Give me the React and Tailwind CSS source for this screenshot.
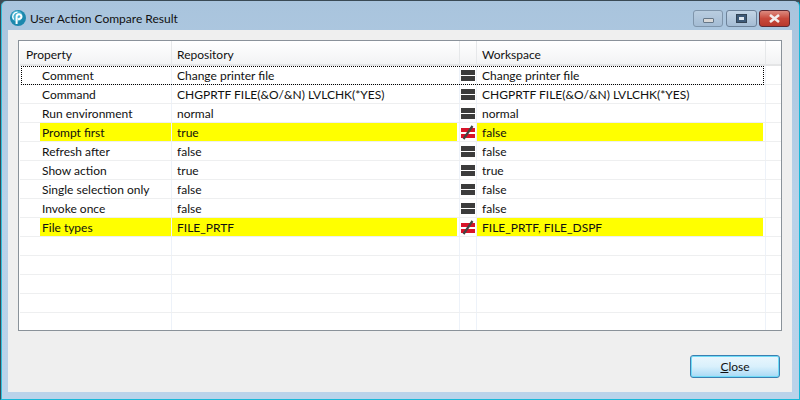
import React from 'react';

const rows = [
    { name: 'Comment', repo: 'Change printer file', work: 'Change printer file', focused: true },
    { name: 'Command', repo: 'CHGPRTF FILE(&O/&N) LVLCHK(*YES)', work: 'CHGPRTF FILE(&O/&N) LVLCHK(*YES)' },
    { name: 'Run environment', repo: 'normal', work: 'normal' },
    { name: 'Prompt first', repo: 'true', work: 'false', diff: true },
    { name: 'Refresh after', repo: 'false', work: 'false' },
    { name: 'Show action', repo: 'true', work: 'true' },
    { name: 'Single selection only', repo: 'false', work: 'false' },
    { name: 'Invoke once', repo: 'false', work: 'false' },
    { name: 'File types', repo: 'FILE_PRTF', work: 'FILE_PRTF, FILE_DSPF', diff: true },
    {}, {}, {}, {}, { last: true },
];

const columns = 'grid grid-cols-[151px_1px_287px_1px_16px_1px_288px_1px_15px]';

const CompareIcon = ({ diff }) => (
    <svg width="14" height="15" viewBox="0 0 14 15" className="block">
        <rect x="0" y={diff ? 3 : 2} width="14" height={diff ? 4 : 5} fill={diff ? '#d8142a' : '#3c3c3c'} />
        <rect x="0" y={diff ? 9 : 8} width="14" height={diff ? 4 : 5} fill={diff ? '#d8142a' : '#3c3c3c'} />
        {diff && <path d="M2.5 14 L11.5 1" stroke="#444" strokeWidth="2.2" />}
    </svg>
);

const Logo = () => (
    <svg width="16" height="16" viewBox="0 0 16 16" className="block shrink-0 ml-[2px]">
        <circle cx="8" cy="8" r="8" fill="#1c88ad" />
        <circle cx="7" cy="6" r="5.5" fill="#49b3d2" />
        <path d="M6.6 14 V6.4 A2.4 2.4 0 1 1 9.8 8.8 L8 9.4" fill="none" stroke="#fff" strokeWidth="2" />
        <path d="M3.6 9.5 A4.6 4.6 0 0 1 7.5 2.2" fill="none" stroke="#fff" strokeWidth="1.3" />
    </svg>
);

const WinButton = ({ children, className }) => (
    <div className={`h-[17px] flex items-center justify-center border rounded-[3px] ${className}`}>
        {children}
    </div>
);

const Cell = ({ children, className = '' }) => (
    <div className={`h-[18px] leading-[20px] whitespace-nowrap overflow-hidden ${className}`}>{children}</div>
);

const Sep = () => <div className="bg-[#edf2f9]" />;

const App = () => {
    return (
        <div className="w-[800px] h-[400px] overflow-hidden bg-[#3d4a52] text-[12px] text-[#111] font-['Lato',sans-serif]">
            <div className="h-full flex flex-col rounded-t-[6px] border border-[#3a4a55] border-b-[#18b8d8] border-r-[#18b8d8] bg-gradient-to-b from-[#a9c4dd] via-[#b9d2e9] to-[#bad3ea] shadow-[inset_1px_0_0_#2fc0dc] px-[7px] pb-[7px]">
                <div className="h-[29px] shrink-0 flex items-start pt-[9px]">
                    <Logo />
                    <span className="ml-[4px] leading-[18px] text-[#111]">User Action Compare Result</span>
                    <div className="ml-auto flex gap-[2px] mr-[2px]">
                        <WinButton className="w-[30px] mr-px border-[#7f95ab] bg-gradient-to-b from-[#b9cde0] to-[#a4bcd4]">
                            <div className="w-[11px] h-[5px] mt-[3px] bg-[#d8d8d8] border border-[#667788] rounded-[1px]" />
                        </WinButton>
                        <WinButton className="w-[31px] border-[#6d8299] bg-gradient-to-b from-[#c3d5e6] to-[#a4bcd4]">
                            <div className="w-[11px] h-[9px] bg-[#3e5a78] border border-[#334455] flex items-center justify-center">
                                <div className="w-[5px] h-[3px] bg-[#dfe8f0]" />
                            </div>
                        </WinButton>
                        <WinButton className="w-[31px] border-[#5e2a34] bg-gradient-to-b from-[#dc8a80] via-[#c8493c] to-[#b8382c]">
                            <svg width="13" height="9" viewBox="0 0 13 9">
                                <path d="M2 1 L11 8 M11 1 L2 8" stroke="#f2eeee" strokeWidth="2.6" />
                            </svg>
                        </WinButton>
                    </div>
                </div>
                <div className="flex-1 flex flex-col bg-[#efefef] px-[10px] pt-[10px] pb-[14px]">
                    <div className="h-[291px] shrink-0 border border-[#8a929a] bg-white overflow-hidden">
                        <div className={`${columns} h-[25px] bg-gradient-to-b from-white to-[#f2f3f4] border-b-2 border-[#e4e5e6] ml-px`}>
                            <div className="pl-[6px] leading-[27px]">Property</div>
                            <div className="bg-[#e6e8ea]" />
                            <div className="pl-[5px] leading-[27px]">Repository</div>
                            <div className="bg-[#e6e8ea]" />
                            <div />
                            <div className="bg-[#e6e8ea]" />
                            <div className="pl-[5px] leading-[27px]">Workspace</div>
                            <div className="bg-[#e6e8ea]" />
                            <div />
                        </div>
                        {rows.map((row, i) => (
                            <div key={i} className={`${columns} ml-px relative ${row.last ? 'h-[16px]' : 'h-[19px] border-b border-[#eeeff0]'}`}>
                                <Cell className={row.diff ? 'bg-[#ffff00] ml-[20px] pl-[2px]' : 'pl-[22px]'}>{row.name}</Cell>
                                <Sep />
                                <Cell className={`pl-[5px] ${row.diff ? 'bg-[#ffff00] mr-[2px]' : ''}`}>{row.repo}</Cell>
                                <Sep />
                                <div className="flex items-center justify-center">
                                    {row.name && <CompareIcon diff={row.diff} />}
                                </div>
                                <Sep />
                                <Cell className={`pl-[5px] ${row.diff ? 'bg-[#ffff00] mr-[2px]' : ''}`}>{row.work}</Cell>
                                <Sep />
                                <div />
                                {row.focused && (
                                    <div className="absolute left-[1px] right-[17px] top-0 -bottom-px border border-dotted border-black" />
                                )}
                            </div>
                        ))}
                    </div>
                    <div className="mt-auto flex justify-end pr-[2px]">
                        <button className="w-[90px] h-[23px] rounded-[3px] border border-[#3c7fb1] bg-gradient-to-b from-[#eaf6fd] via-[#d9f0fc] to-[#a7d9f5] shadow-[inset_0_0_0_1px_#6fdcf7] text-[#111]">
                            <span className="underline">C</span>lose
                        </button>
                    </div>
                </div>
            </div>
        </div>
    );
};

export default App;
